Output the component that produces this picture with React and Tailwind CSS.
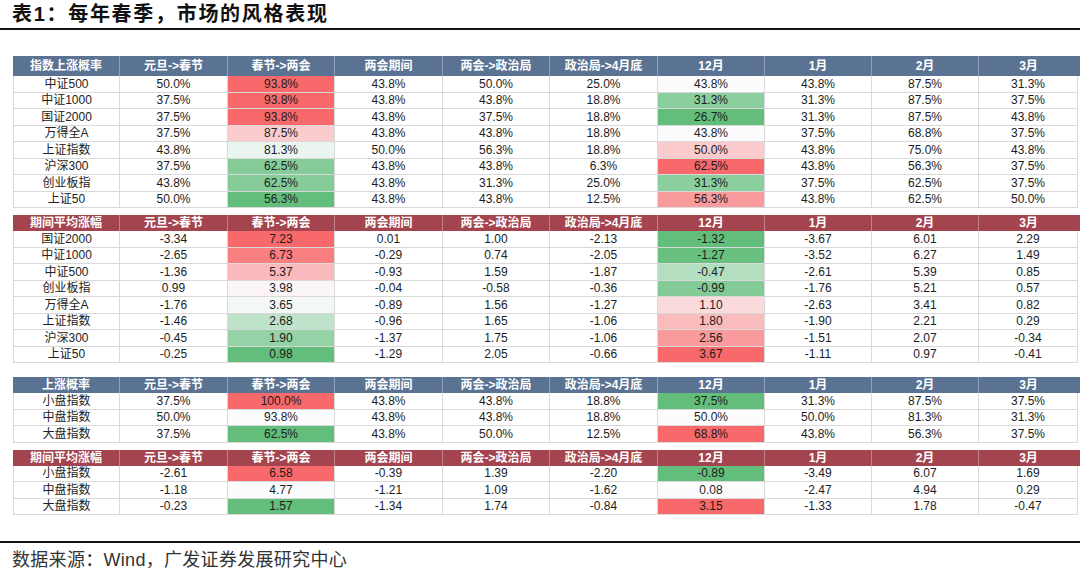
import React from "react";

const COLS = ["元旦->春节", "春节->两会", "两会期间", "两会->政治局", "政治局->4月底", "12月", "1月", "2月", "3月"];
const WIDTHS = ["w-[107px]", "w-[108px]", "w-[107px]", "w-[108px]", "w-[107px]", "w-[108px]", "w-[107px]", "w-[107px]", "w-[107px]", "w-[99px]"];
const HEAT = [1, 5];

const tables = [
  {
    title: "指数上涨概率",
    tone: "blue",
    headH: "h-[20px]",
    pct: true,
    rows: [
      ["中证500", 50.0, 93.8, 43.8, 50.0, 25.0, 43.8, 43.8, 87.5, 31.3],
      ["中证1000", 37.5, 93.8, 43.8, 43.8, 18.8, 31.3, 31.3, 87.5, 37.5],
      ["国证2000", 37.5, 93.8, 43.8, 37.5, 18.8, 26.7, 31.3, 87.5, 43.8],
      ["万得全A", 37.5, 87.5, 43.8, 43.8, 18.8, 43.8, 37.5, 68.8, 37.5],
      ["上证指数", 43.8, 81.3, 50.0, 56.3, 18.8, 50.0, 43.8, 75.0, 43.8],
      ["沪深300", 37.5, 62.5, 43.8, 43.8, 6.3, 62.5, 43.8, 56.3, 37.5],
      ["创业板指", 43.8, 62.5, 43.8, 31.3, 25.0, 31.3, 37.5, 62.5, 37.5],
      ["上证50", 50.0, 56.3, 43.8, 43.8, 12.5, 56.3, 43.8, 62.5, 50.0],
    ],
  },
  {
    title: "期间平均涨幅",
    tone: "red",
    headH: "h-[16px]",
    pct: false,
    rows: [
      ["国证2000", -3.34, 7.23, 0.01, 1.0, -2.13, -1.32, -3.67, 6.01, 2.29],
      ["中证1000", -2.65, 6.73, -0.29, 0.74, -2.05, -1.27, -3.52, 6.27, 1.49],
      ["中证500", -1.36, 5.37, -0.93, 1.59, -1.87, -0.47, -2.61, 5.39, 0.85],
      ["创业板指", 0.99, 3.98, -0.04, -0.58, -0.36, -0.99, -1.76, 5.21, 0.57],
      ["万得全A", -1.76, 3.65, -0.89, 1.56, -1.27, 1.1, -2.63, 3.41, 0.82],
      ["上证指数", -1.46, 2.68, -0.96, 1.65, -1.06, 1.8, -1.9, 2.21, 0.29],
      ["沪深300", -0.45, 1.9, -1.37, 1.75, -1.06, 2.56, -1.51, 2.07, -0.34],
      ["上证50", -0.25, 0.98, -1.29, 2.05, -0.66, 3.67, -1.11, 0.97, -0.41],
    ],
  },
  {
    title: "上涨概率",
    tone: "blue",
    headH: "h-[16px]",
    pct: true,
    rows: [
      ["小盘指数", 37.5, 100.0, 43.8, 43.8, 18.8, 37.5, 31.3, 87.5, 37.5],
      ["中盘指数", 50.0, 93.8, 43.8, 43.8, 18.8, 50.0, 50.0, 81.3, 31.3],
      ["大盘指数", 37.5, 62.5, 43.8, 50.0, 12.5, 68.8, 43.8, 56.3, 37.5],
    ],
  },
  {
    title: "期间平均涨幅",
    tone: "red",
    headH: "h-[16px]",
    pct: false,
    rows: [
      ["小盘指数", -2.61, 6.58, -0.39, 1.39, -2.2, -0.89, -3.49, 6.07, 1.69],
      ["中盘指数", -1.18, 4.77, -1.21, 1.09, -1.62, 0.08, -2.47, 4.94, 0.29],
      ["大盘指数", -0.23, 1.57, -1.34, 1.74, -0.84, 3.15, -1.33, 1.78, -0.47],
    ],
  },
];

const RED = [248, 105, 107];
const WHITE = [252, 252, 255];
const GREEN = [99, 190, 123];

function median(vals) {
  const s = [...vals].sort((a, b) => a - b);
  const n = s.length;
  const pos = (n - 1) * 0.5;
  const lo = Math.floor(pos);
  const hi = Math.ceil(pos);
  return s[lo] + (s[hi] - s[lo]) * (pos - lo);
}

function mix(a, b, t) {
  return `rgb(${a.map((v, i) => Math.round(v + (b[i] - v) * t)).join(",")})`;
}

function heatColor(v, vals) {
  const min = Math.min(...vals);
  const max = Math.max(...vals);
  const mid = median(vals);
  if (v >= mid) {
    const t = max === mid ? 0 : (v - mid) / (max - mid);
    return mix(WHITE, RED, t);
  }
  const t = mid === min ? 0 : (mid - v) / (mid - min);
  return mix(WHITE, GREEN, t);
}

function fmt(v, pct) {
  return pct ? `${v.toFixed(1)}%` : v.toFixed(2);
}

function Table({ t, className }) {
  const headBg = t.tone === "blue" ? "bg-[#5b7393]" : "bg-[#a4444f]";
  const headSep = t.tone === "blue" ? "border-[#8fa1b8]" : "border-[#c4808a]";
  const colVals = HEAT.map((ci) => t.rows.map((r) => r[ci + 1]));
  return (
    <div className={className}>
      <div className={`flex ${t.headH} ${headBg}`}>
        {[t.title, ...COLS].map((h, i) => (
          <div
            key={i}
            className={`${WIDTHS[i]} shrink-0 flex items-center justify-center text-white font-bold text-[12px] ${i < 9 ? `border-r ${headSep}` : ""}`}
          >
            {h}
          </div>
        ))}
      </div>
      {t.rows.map((r, ri) => (
        <div key={ri} className="flex h-[16.5px]">
          <div className={`${WIDTHS[0]} shrink-0 flex items-center justify-center border-l border-r border-b border-[#d9d9d9] text-[12px] text-[#222]`}>
            {r[0]}
          </div>
          {r.slice(1).map((v, ci) => {
            const hi = HEAT.indexOf(ci);
            const bg = hi >= 0 ? heatColor(v, colVals[hi]) : undefined;
            return (
              <div
                key={ci}
                style={bg ? { backgroundColor: bg } : undefined}
                className={`${WIDTHS[ci + 1]} shrink-0 flex items-center justify-center border-r border-b border-[#d9d9d9] text-[12px] text-[#1c1c1c] font-['Liberation_Sans',Arial,sans-serif]`}
              >
                {fmt(v, t.pct)}
              </div>
            );
          })}
        </div>
      ))}
    </div>
  );
}

export default function App() {
  return (
    <div className="w-[1080px] h-[579px] bg-white overflow-hidden font-['Liberation_Sans','Noto_Sans_CJK_SC',sans-serif] text-black">
      <div className="h-[30px] border-b-2 border-[#111]">
        <div className="pl-[12px] h-[28px] leading-[28px] text-[20px] font-bold tracking-[1.7px] text-[#111]">
          表1：每年春季，市场的风格表现
        </div>
      </div>
      <div className="pl-[13px]">
        <Table t={tables[0]} className="mt-[26px]" />
        <Table t={tables[1]} className="mt-[7px]" />
        <Table t={tables[2]} className="mt-[14px]" />
        <Table t={tables[3]} className="mt-[7px]" />
      </div>
      <div className="mt-[26px] border-t-2 border-[#111]">
        <div className="pl-[12px] pt-[5px] text-[18px] leading-[24px] tracking-[0.3px] text-[#333]">
          数据来源：Wind，广发证券发展研究中心
        </div>
      </div>
    </div>
  );
}
